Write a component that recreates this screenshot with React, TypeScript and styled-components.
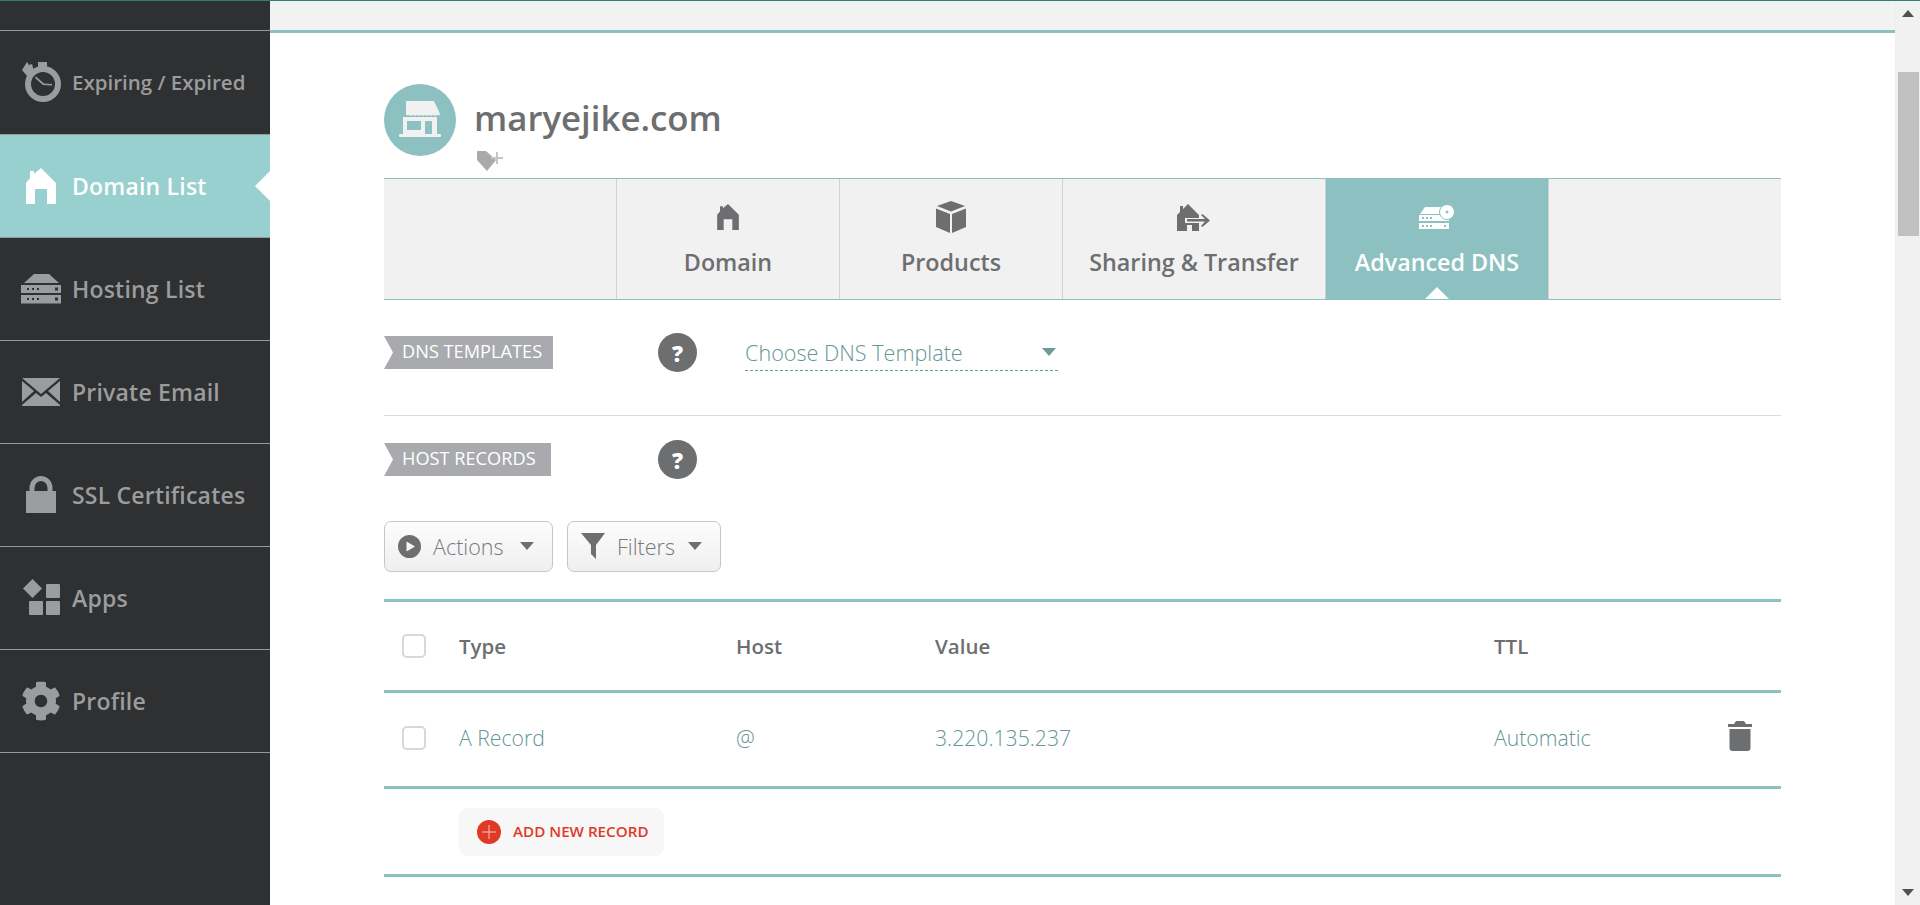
import React from 'react';
import styled, { createGlobalStyle } from 'styled-components';
import { FaCog } from 'react-icons/fa';

const Global = createGlobalStyle`
  html, body { margin: 0; padding: 0; overflow: hidden; background: #fff; }
  * { box-sizing: border-box; }
  body { font-family: "Open Sans", Lato, sans-serif; }
`;

const Page = styled.div`
  width: 1920px; height: 905px; display: flex; overflow: hidden;
  border-top: 1px solid #2f7f78; background: #fff;
`;
const Sidebar = styled.nav`
  width: 270px; flex: none; background: #2f3032; padding-top: 29px; display: flex; flex-direction: column;
`;
const SideList = styled.ul`
  list-style: none; margin: 0; padding: 0; border-top: 1px solid #97989a;
`;
const SideItem = styled.li<{ $active?: boolean; $small?: boolean }>`
  position: relative; height: 103px; display: flex; align-items: center;
  padding-bottom: 1px;
  border-bottom: 1px solid #97989a;
  background: ${p => (p.$active ? '#97d0ce' : 'transparent')};
  color: ${p => (p.$active ? '#fff' : '#9b9c9d')};
  font-size: ${p => (p.$small ? '20.5px' : '23px')}; font-weight: 600; letter-spacing: ${p => (p.$small ? 0 : '0.2px')};
  &:first-child { height: 104px; }
  &::after {
    content: ${p => (p.$active ? '""' : 'none')};
    position: absolute; right: 0; top: 50%; margin-top: -15px;
    border-style: solid; border-width: 15px 15px 15px 0;
    border-color: transparent #fff transparent transparent;
  }
`;
const SideIcon = styled.span`
  width: 72px; flex: none; display: flex; justify-content: center; padding-left: 10px;
  svg { display: block; fill: currentColor; }
`;
const Main = styled.main`
  flex: 1; min-width: 0; display: flex; flex-direction: column;
`;
const TopBand = styled.div`
  height: 32px; flex: none; background: #f2f2f2; border-bottom: 3px solid #8bc1c0;
`;
const Content = styled.div`
  padding: 51px 114px 0;
`;
const Header = styled.header`
  height: 94px; display: flex; gap: 18px; align-items: flex-start;
`;
const Avatar = styled.div`
  width: 72px; height: 72px; border-radius: 50%; background: #8dc1c1; display: flex; align-items: center; justify-content: center; flex: none;
  svg { display: block; }
`;
const TitleBlock = styled.div`
  display: flex; flex-direction: column;
`;
const Title = styled.h1`
  margin: 11px 0 0; font-size: 34.800px; line-height: 46px; font-weight: 600; color: #6d6e70;
`;
const TagIcon = styled.svg`
  display: block; margin: 10px 0 0 3px;
`;
const Tabs = styled.div`
  height: 122px; display: flex; background: #f1f1f1;
  border-top: 1px solid #8bc1c0; border-bottom: 1px solid #8bc1c0;
`;
const TabBlank = styled.div`
  width: 233px; flex: none; border-right: 1px solid #d2d2d2;
`;
const Tab = styled.div<{ $active?: boolean; $w: number }>`
  position: relative; width: ${p => p.$w}px; flex: none; display: flex; flex-direction: column; align-items: center;
  border-right: 1px solid #d2d2d2;
  padding-top: 20px;
  background: ${p => (p.$active ? '#8dc1c1' : 'transparent')};
  color: ${p => (p.$active ? '#fff' : '#6d6e70')};
  font-size: 23.3px; font-weight: 600;
  &::after {
    content: ${p => (p.$active ? '""' : 'none')};
    position: absolute; left: 50%; bottom: 0; margin-left: -12px;
    border-style: solid; border-width: 0 12px 12px;
    border-color: transparent transparent #fff;
  }
`;
const TabIcon = styled.span`
  height: 36px; display: flex; align-items: center; justify-content: center; color: inherit;
  svg { display: block; fill: currentColor; }
`;
const TabLabel = styled.span`
  margin-top: 12px; line-height: 30px; white-space: nowrap;
`;
const SectionRow = styled.div<{ $top: number }>`
  margin-top: ${p => p.$top}px; height: 39px; display: grid; grid-template-columns: 274px 87px 1fr; align-items: center;
`;
const Ribbon = styled.div<{ $w: number }>`
  width: ${p => p.$w}px; height: 33px; background: #a9aaae; color: #fff; font-size: 18.200px; font-weight: 400;
  padding-left: 18px; line-height: 30px; white-space: nowrap; text-transform: uppercase;
  clip-path: polygon(0 0, 100% 0, 100% 100%, 0 100%, 9px 50%);
`;
const Help = styled.div`
  width: 39px; height: 39px; border-radius: 50%; background: #6d6e70; color: #fff;
  display: flex; align-items: center; justify-content: center; font-size: 22px; font-weight: 800;
`;
const Select = styled.div`
  width: 313px; height: 37px; display: flex; align-items: center; justify-content: space-between;
  border-bottom: 1px dashed #6d9a9a; color: #659595; font-size: 21.600px; font-weight: 300; padding: 0 2px 0 0;
`;
const CaretDown = styled.span<{ $c: string }>`
  display: block; width: 0; height: 0; border-style: solid; border-width: 8px 7.5px 0;
  border-color: ${p => p.$c} transparent transparent;
`;
const Divider = styled.hr`
  margin: 43px 0 0; border: 0; height: 1px; background: #dcdcdc;
`;
const Toolbar = styled.div`
  margin-top: 42px; display: flex; gap: 14px;
`;
const ToolButton = styled.div<{ $w: number }>`
  width: ${p => p.$w}px; height: 51px; display: flex; align-items: center; gap: 12px; padding: 0 18px 1px 13px;
  border: 1px solid #c6c6c6; border-radius: 7px; background: linear-gradient(#fdfdfd, #efefef);
  color: #77787a; font-size: 21.500px; font-weight: 300;
  svg { display: block; fill: #6d6e70; flex: none; }
`;
const ToolCaret = styled.span`
  margin-left: auto; display: flex;
`;
const Table = styled.div`
  margin-top: 27px; border-top: 3px solid #8bc1c0;
`;
const Row = styled.div<{ $h: number; $head?: boolean }>`
  height: ${p => p.$h}px; display: grid; grid-template-columns: 75px 277px 199px 559px 1fr 53px; align-items: center;
  padding-bottom: ${p => (p.$head ? '1px' : '4px')};
  border-bottom: 3px solid #8bc1c0;
  color: ${p => (p.$head ? '#6d6e70' : '#659595')};
  font-size: ${p => (p.$head ? '20.500px' : '21.200px')};
  font-weight: ${p => (p.$head ? 600 : 300)};
`;
const Check = styled.span`
  display: block; margin-left: 18px; width: 24px; height: 24px; border: 2px solid #d8d8d8; border-radius: 5px; background: #fff;
`;
const TrashCell = styled.span`
  justify-self: start; margin: -4px 0 0 0;
  svg { display: block; fill: #6d6e70; }
`;
const AddRow = styled.div`
  height: 88px; padding: 19px 0 0 75px; border-bottom: 3px solid #8bc1c0;
`;
const AddButton = styled.div`
  width: 205px; height: 48px; background: #f7f7f7; border-radius: 9px; display: flex; align-items: center; gap: 12px; padding: 0 0 3px 18px;
  color: #e03a27; font-size: 15.200px; font-weight: 600; white-space: nowrap;
`;
const AddCircle = styled.svg`
  display: block; flex: none; margin-top: 3px;
`;
const Scrollbar = styled.div`
  width: 25px; flex: none; background: #f1f1f1; display: flex; flex-direction: column; align-items: center;
  border-left: 1px solid #efefef;
`;
const ScrollArrow = styled.svg<{ $top: number }>`
  display: block; flex: none; margin-top: ${p => p.$top}px; fill: #505050;
`;
const Thumb = styled.div`
  width: 21px; height: 164px; flex: none; margin-top: 55px; background: #c1c1c1;
`;

const Stopwatch = () => (
  <svg width="40" height="42" viewBox="0 0 40 42">
    <rect x="17" y="1" width="9" height="7" />
    <path d="M1 9 6 1l2 3 3-1 2 7-7 5Z" />
    <path fillRule="evenodd" d="M22 5a18 18 0 1 1 0 36 18 18 0 0 1 0-36Zm0 6a12 12 0 1 0 0 24 12 12 0 0 0 0-24Z" />
    <path d="M15 15.500 23 22.500l8 .5v1.500l-9-.5-8-7Z" />
  </svg>
);
const House = ({ w, h }: { w: number; h: number }) => (
  <svg width={w} height={h} viewBox="0 0 30 36">
    <path d="M0 36V15l4-5V3h4v3l7-6 15 15v21h-9V21H9v15Z" />
  </svg>
);
const Server = () => (
  <svg width="40" height="30" viewBox="0 0 40 30">
    <path d="M13 0h15l10 9H3Z" />
    <path fillRule="evenodd" d="M0 11h40v8H0Zm6 3v2h2v-2Zm5 0v2h2v-2Zm5 0v2h2v-2Zm18-.500v3h3v-3Z" />
    <path fillRule="evenodd" d="M0 21h40v8.500H0Zm6 3v2h2v-2Zm5 0v2h2v-2Zm5 0v2h2v-2Zm18-.500v3h3v-3Z" />
  </svg>
);
const Envelope = () => (
  <svg width="38" height="28" viewBox="0 0 38 28">
    <path d="M0 0h38L19 16Z" />
    <path d="M0 3l12 10L0 24Z" />
    <path d="M38 3 26 13l12 11Z" />
    <path d="M0 27v1h38v-1L24 15l-5 4-5-4Z" />
  </svg>
);
const Lock = () => (
  <svg width="30" height="37" viewBox="0 0 30 37">
    <path fillRule="evenodd" d="M0 15h3.500V12a11.500 12 0 0 1 23 0v3H30v22H0ZM8.500 15h13v-3a6.500 7 0 0 0-13 0Z" />
  </svg>
);
const Apps = () => (
  <svg width="37" height="37" viewBox="0 0 37 37">
    <path d="M9.500 0 19 9.500 9.500 19 0 9.500Z" />
    <rect x="23" y="5" width="14" height="14" rx="1" />
    <rect x="6" y="22" width="14" height="14" rx="1" />
    <rect x="23" y="22" width="14" height="14" rx="1" />
  </svg>
);
const Box = () => (
  <svg width="32" height="32" viewBox="0 0 32 32">
    <path d="M16 0 30 5 16 10.500 2 5Z" />
    <path d="M1 7.500 15 13v19L1 26Z" />
    <path d="M31 7.500 17 13v19l14-6Z" />
  </svg>
);
const HouseTransfer = () => (
  <svg width="34" height="27" viewBox="0 0 34 27">
    <path d="M0 27V11l3-3V2h3v3l5-5 11 11v3H8v5h14v8h-7v-6H10v6Z" />
    <path d="M10 15h18l-4-4 1.500-1L33 16.500 25.500 23 24 22l4-4.500H10Z" />
  </svg>
);
const ServerGear = () => (
  <svg width="36" height="25" viewBox="0 0 36 25">
    <path d="M6 2h17l1 7H1Z" />
    <path fillRule="evenodd" d="M0 10h30v6H0Zm3 2v2h2v-2Zm4 0v2h2v-2Zm4 0v2h2v-2Zm14 0v2h2v-2Z" />
    <path fillRule="evenodd" d="M0 18h30v6H0Zm3 2v2h2v-2Zm4 0v2h2v-2Zm4 0v2h2v-2Zm14 0v2h2v-2Z" />
    <circle cx="28" cy="7" r="7.500" stroke="#8dc1c1" strokeWidth="1" />
    <circle cx="28" cy="7" r="1.500" fill="#8dc1c1" />
  </svg>
);
const Shop = () => (
  <svg width="42" height="38" viewBox="0 0 42 38">
    <path fill="#f1f1f1" d="M7 0h28l6 13c0 1.500-2 2-3 .8-1 1.200-3 1.200-4 0-1 1.200-3 1.200-4 0-1 1.200-3 1.200-4 0-1 1.200-3 1.200-4 0-1 1.200-3 1.200-4 0-1 1.200-3 1.200-4 0-1 1.200-3 1.200-4 0-1 1.200-3 .7-3-.8Z" />
    <path fill="#f1f1f1" fillRule="evenodd" d="M4 16h34v17H4Zm4 4v9h14v-9Zm18 0v13h7V20Z" />
    <rect x="0" y="33" width="42" height="3" rx="1" fill="#f1f1f1" />
  </svg>
);

const nav = [
  { label: 'Expiring / Expired', icon: <Stopwatch />, small: true },
  { label: 'Domain List', icon: <House w={30} h={36} />, active: true },
  { label: 'Hosting List', icon: <Server /> },
  { label: 'Private Email', icon: <Envelope /> },
  { label: 'SSL Certificates', icon: <Lock /> },
  { label: 'Apps', icon: <Apps /> },
  { label: 'Profile', icon: <FaCog size={40} /> },
];

const tabs = [
  { label: 'Domain', w: 223, icon: <House w={22} h={26} /> },
  { label: 'Products', w: 223, icon: <Box /> },
  { label: 'Sharing & Transfer', w: 263, icon: <HouseTransfer /> },
  { label: 'Advanced DNS', w: 223, icon: <ServerGear />, active: true },
];

export default function App() {
  return (
    <>
      <Global />
      <Page>
        <Sidebar>
          <SideList>
            {nav.map(n => (
              <SideItem key={n.label} $active={n.active} $small={n.small}>
                <SideIcon>{n.icon}</SideIcon>
                {n.label}
              </SideItem>
            ))}
          </SideList>
        </Sidebar>
        <Main>
          <TopBand />
          <Content>
            <Header>
              <Avatar><Shop /></Avatar>
              <TitleBlock>
                <Title>maryejike.com</Title>
                <TagIcon width="26" height="20" viewBox="0 0 26 20">
                  <path fill="#a9aaae" d="M0 0h9l10 9-9 11L0 9Z" />
                  <path fill="#c4c5c7" d="M19 1h2v5h5v2h-5v5h-2V8h-5V6h5Z" />
                </TagIcon>
              </TitleBlock>
            </Header>
            <Tabs>
              <TabBlank />
              {tabs.map(t => (
                <Tab key={t.label} $w={t.w} $active={t.active}>
                  <TabIcon>{t.icon}</TabIcon>
                  <TabLabel>{t.label}</TabLabel>
                </Tab>
              ))}
            </Tabs>
            <SectionRow $top={33}>
              <Ribbon $w={169}>DNS Templates</Ribbon>
              <Help>?</Help>
              <Select>Choose DNS Template<CaretDown $c="#6d9a9a" /></Select>
            </SectionRow>
            <Divider />
            <SectionRow $top={24}>
              <Ribbon $w={167}>Host Records</Ribbon>
              <Help>?</Help>
            </SectionRow>
            <Toolbar>
              <ToolButton $w={169}>
                <svg width="23" height="23" viewBox="0 0 23 23">
                  <path fillRule="evenodd" d="M11.500 0a11.500 11.500 0 1 1 0 23 11.500 11.500 0 0 1 0-23ZM8.500 6.500v10l8.500-5Z" />
                </svg>
                Actions
                <ToolCaret><CaretDown $c="#6d6e70" /></ToolCaret>
              </ToolButton>
              <ToolButton $w={154}>
                <svg width="24" height="26" viewBox="0 0 24 26">
                  <path d="M0 0h24l-9 12v14l-5-5v-9Z" />
                </svg>
                Filters
                <ToolCaret><CaretDown $c="#6d6e70" /></ToolCaret>
              </ToolButton>
            </Toolbar>
            <Table>
              <Row $h={91} $head>
                <Check />
                <span>Type</span>
                <span>Host</span>
                <span>Value</span>
                <span>TTL</span>
              </Row>
              <Row $h={96}>
                <Check />
                <span>A Record</span>
                <span>@</span>
                <span>3.220.135.237</span>
                <span>Automatic</span>
                <TrashCell>
                  <svg width="24" height="30" viewBox="0 0 24 30">
                    <path d="M8 0h8l2 3h6v3H0V3h6Z" />
                    <path d="M1.500 8h21v19a3 3 0 0 1-3 3h-15a3 3 0 0 1-3-3Z" />
                  </svg>
                </TrashCell>
              </Row>
              <AddRow>
                <AddButton>
                  <AddCircle width="24" height="24" viewBox="0 0 24 24">
                    <circle cx="12" cy="12" r="12" fill="#e03a27" />
                    <path d="M12 5v14M5 12h14" stroke="#f5c5bd" strokeWidth="1" />
                  </AddCircle>
                  ADD NEW RECORD
                </AddButton>
              </AddRow>
            </Table>
          </Content>
        </Main>
        <Scrollbar>
          <ScrollArrow $top={9} width="12" height="7" viewBox="0 0 12 7"><path d="M6 0l6 7H0Z" /></ScrollArrow>
          <Thumb />
          <ScrollArrow $top={653} width="12" height="7" viewBox="0 0 12 7"><path d="M0 0h12L6 7Z" /></ScrollArrow>
        </Scrollbar>
      </Page>
    </>
  );
}
